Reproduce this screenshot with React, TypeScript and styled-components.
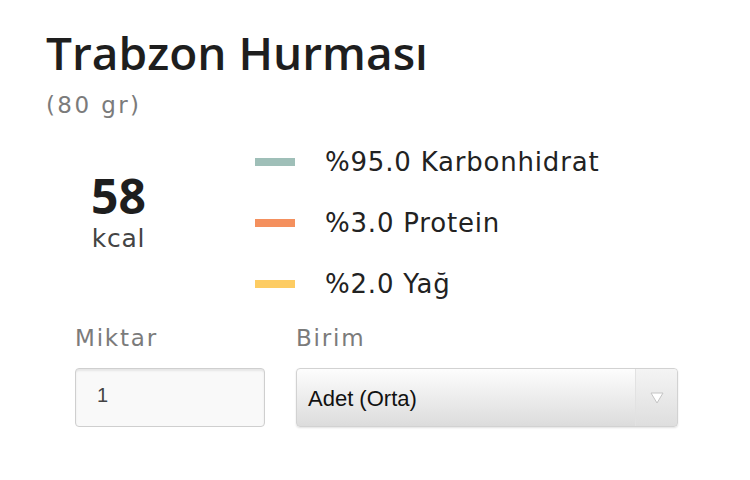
import React from "react";
import styled, { createGlobalStyle } from "styled-components";

const Global = createGlobalStyle`
  html, body { margin: 0; padding: 0; background: #fff; }
  body { font-family: "DejaVu Sans", "Open Sans", sans-serif; color: #222; }
`;

const Page = styled.div`
  width: 750px;
  height: 480px;
  box-sizing: border-box;
  padding: 20px 0 0 46px;
`;

const Title = styled.h1`
  margin: 0;
  font-family: "Open Sans", sans-serif;
  font-size: 46px;
  line-height: 64px;
  font-weight: 600;
  color: #1e1e1e;
`;

const Portion = styled.div`
  margin-top: 6px;
  font-size: 23px;
  line-height: 30px;
  color: #7b7b7b;
  letter-spacing: 2.4px;
`;

const Summary = styled.div`
  display: flex;
  align-items: flex-start;
  margin-top: 26px;
`;

const Energy = styled.div`
  width: 145px;
  display: flex;
  flex-direction: column;
  align-items: center;
  padding-top: 32px;
`;

const Kcal = styled.div`
  font-family: "Open Sans", sans-serif;
  font-size: 48px;
  line-height: 36px;
  font-weight: 700;
  color: #1e1e1e;
`;

const Unit = styled.div`
  margin-top: 13px;
  font-size: 25px;
  line-height: 24px;
  color: #444;
  letter-spacing: 0.8px;
`;

const Legend = styled.ul`
  list-style: none;
  margin: 0 0 0 64px;
  padding: 0;
  display: flex;
  flex-direction: column;
  gap: 29px;
`;

const LegendItem = styled.li`
  display: flex;
  align-items: center;
  height: 32px;
  font-size: 26px;
  color: #222;
  letter-spacing: 0.8px;
`;

const Swatch = styled.span<{ $color: string }>`
  display: inline-block;
  width: 40px;
  height: 8px;
  background: ${(p) => p.$color};
  margin-right: 30px;
`;

const Form = styled.div`
  display: flex;
  gap: 31px;
  margin: 23px 0 0 29px;
`;

const Field = styled.div<{ $width: number }>`
  display: flex;
  flex-direction: column;
  width: ${(p) => p.$width}px;
`;

const Label = styled.label`
  font-size: 23px;
  line-height: 30px;
  color: #7b7b7b;
  margin-bottom: 15px;
  letter-spacing: 1.8px;
`;

const Input = styled.input`
  box-sizing: border-box;
  height: 59px;
  width: 100%;
  border: 1px solid #cfcfcf;
  border-radius: 4px;
  background: #f9f9f9;
  box-shadow: inset 0 2px 2px rgba(0, 0, 0, 0.08);
  font-family: "Liberation Sans", Arial, sans-serif;
  font-size: 20px;
  color: #444;
  padding: 0 0 5px 21px;
  outline: none;
`;

const SelectBox = styled.div`
  box-sizing: border-box;
  height: 59px;
  width: 100%;
  border: 1px solid #d2d2d2;
  border-radius: 4px;
  background: linear-gradient(#fdfdfd, #dcdcdc);
  box-shadow: 0 1px 2px rgba(0, 0, 0, 0.12);
  display: flex;
  align-items: stretch;
`;

const SelectValue = styled.div`
  flex: 1;
  display: flex;
  align-items: center;
  padding: 2px 0 0 11px;
  font-family: "Liberation Sans", Arial, sans-serif;
  font-size: 22px;
  color: #111;
`;

const Arrow = styled.div`
  width: 41px;
  border-left: 1px solid #e2e2e2;
  display: flex;
  align-items: center;
  justify-content: center;
  background: linear-gradient(#f4f4f4, #dedede);
  border-radius: 0 4px 4px 0;
`;

export default function App() {
  return (
    <>
      <Global />
      <Page>
        <Title>Trabzon Hurması</Title>
        <Portion>(80 gr)</Portion>
        <Summary>
          <Energy>
            <Kcal>58</Kcal>
            <Unit>kcal</Unit>
          </Energy>
          <Legend>
            <LegendItem>
              <Swatch $color="#9fbfb8" />
              %95.0 Karbonhidrat
            </LegendItem>
            <LegendItem>
              <Swatch $color="#f4905e" />
              %3.0 Protein
            </LegendItem>
            <LegendItem>
              <Swatch $color="#fdcc63" />
              %2.0 Yağ
            </LegendItem>
          </Legend>
        </Summary>
        <Form>
          <Field $width={190}>
            <Label>Miktar</Label>
            <Input defaultValue="1" />
          </Field>
          <Field $width={382}>
            <Label>Birim</Label>
            <SelectBox>
              <SelectValue>Adet (Orta)</SelectValue>
              <Arrow>
                <svg width="14" height="12" viewBox="0 0 14 12">
                  <path d="M1 1 L13 1 L7 11 Z" fill="#fff" stroke="#c4c4c4" strokeWidth="1" />
                </svg>
              </Arrow>
            </SelectBox>
          </Field>
        </Form>
      </Page>
    </>
  );
}
